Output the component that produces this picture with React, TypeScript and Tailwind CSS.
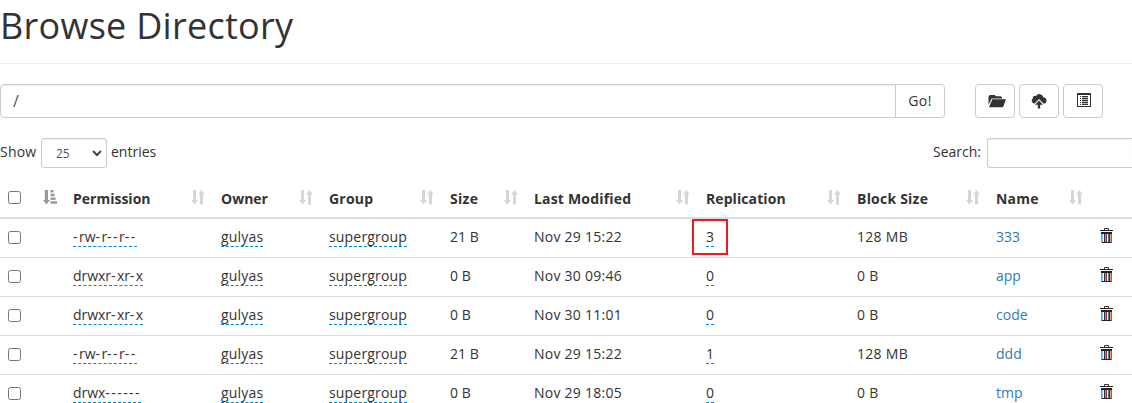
import React from "react";

type Column = { label: string; width: string; tracking: string };

const columns: Column[] = [
  { label: "Permission", width: "w-[148px]", tracking: "tracking-normal" },
  { label: "Owner", width: "w-[108px]", tracking: "tracking-normal" },
  { label: "Group", width: "w-[121px]", tracking: "tracking-[0.2px]" },
  { label: "Size", width: "w-[84px]", tracking: "tracking-[0.3px]" },
  { label: "Last Modified", width: "w-[172px]", tracking: "tracking-[0.18px]" },
  { label: "Replication", width: "w-[151px]", tracking: "tracking-[0.08px]" },
  { label: "Block Size", width: "w-[139px]", tracking: "tracking-[0.22px]" },
  { label: "Name", width: "w-[103px]", tracking: "tracking-[0.2px]" },
];

type Entry = {
  permission: string;
  size: string;
  modified: string;
  replication: string;
  block: string;
  name: string;
  marked?: boolean;
};

const entries: Entry[] = [
  { permission: "-rw-r--r--", size: "21 B", modified: "Nov 29 15:22", replication: "3", block: "128 MB", name: "333", marked: true },
  { permission: "drwxr-xr-x", size: "0 B", modified: "Nov 30 09:46", replication: "0", block: "0 B", name: "app" },
  { permission: "drwxr-xr-x", size: "0 B", modified: "Nov 30 11:01", replication: "0", block: "0 B", name: "code" },
  { permission: "-rw-r--r--", size: "21 B", modified: "Nov 29 15:22", replication: "1", block: "128 MB", name: "ddd" },
  { permission: "drwx------", size: "0 B", modified: "Nov 29 18:05", replication: "0", block: "0 B", name: "tmp" },
];

function SortIcon() {
  return (
    <svg width="14" height="15" viewBox="0 0 14 15" fill="#d6d6d6" className="shrink-0">
      <path d="M2 0h3v10h2l-3.500 4.500L0 10h2zM9 14.500V4.500H7L10.500 0 14 4.500h-2v10z" />
    </svg>
  );
}

function SortedIcon() {
  return (
    <svg width="14" height="15" viewBox="0 0 14 15" fill="#999" className="shrink-0">
      <path d="M1.800 0h3.200v10h2l-3.500 4.500L0 10h1.800zM7.500 0h3v2.500h-3zM7.500 3.700h4v2.500h-4zM7.500 7.500h5V10h-5zM7.500 11.200H14v2.500H7.500z" />
    </svg>
  );
}

function FolderOpenIcon() {
  return (
    <svg width="18" height="14" viewBox="0 0 18 14" fill="#333">
      <path d="M.500 11V2.500L1.800 1h5l1 1.300H13L14 3.500V4.500H3.500z" />
      <path d="M4.300 5.300H18L15 13.300H1z" />
    </svg>
  );
}

function CloudUploadIcon() {
  return (
    <svg width="16" height="15" viewBox="0 0 16 15" fill="#333">
      <path d="M3 9.500A2.900 2.900 0 0 1 1.800 4.400 2.300 2.300 0 0 1 5 2 4 4 0 0 1 12.300 3.300a3.200 3.200 0 0 1 1.200 6.200H12.500L8 5 3.700 9.500z" />
      <path d="M8 6.500l4 4.300H9.200v3.700H6.800v-3.700H4z" />
    </svg>
  );
}

function ListIcon() {
  return (
    <svg width="14" height="14" viewBox="0 0 14 14" shapeRendering="crispEdges">
      <path fill="#333" fillRule="evenodd" d="M0 0h14v14H0zM1 2v11h12V2z" />
      <path fill="#333" d="M3 3h1v1H3zM5 3h6v1H5zM3 5h1v1H3zM5 5h6v1H5zM3 7h1v1H3zM5 7h6v1H5zM3 9h1v1H3zM5 9h6v1H5zM3 11h1v1H3zM5 11h6v1H5z" />
      <path fill="#333" opacity="0.35" d="M5 4h6v1H5zM5 6h6v1H5zM5 8h6v1H5zM5 10h6v1H5z" />
    </svg>
  );
}

function TrashIcon() {
  return (
    <svg width="13" height="16" viewBox="0 0 13 16" fill="none">
      <path stroke="#333" d="M4.500 2V.500h4V2" />
      <path fill="#222" d="M0 2h13v1H0zM1 4h11v2H1zM1 14h11v1H1z" />
      <path fill="#d58b35" d="M1 6h1v9H1zM5 6h1v8H5z" />
      <path fill="#8ac4f2" d="M2 6h1v8H2z" />
      <path fill="#333" d="M4 6h1v8H4zM9 6h1v8H9z" />
      <path fill="#8b3156" d="M6 6h1v8H6z" />
      <path fill="#4c7ba8" d="M8 6h1v8H8zM11 6h1v9h-1z" />
      <path fill="#e8a552" d="M10 6h1v8h-1z" />
    </svg>
  );
}

function Checkbox() {
  return (
    <input
      type="checkbox"
      className="block size-[13px] shrink-0 appearance-none rounded-[2.5px] border border-[#767676] bg-white"
    />
  );
}

function Editable({ children, tracking = "tracking-normal" }: { children: React.ReactNode; tracking?: string }) {
  return <span className={`block h-5 border-b border-dashed border-[#0088cc] leading-5 ${tracking}`}>{children}</span>;
}

function Permission({ mode }: { mode: string }) {
  return (
    <Editable>
      {mode.split(/(-+)/).map((part, i) => (
        <span key={i} className={part.startsWith("-") ? "tracking-[1.45px]" : "tracking-[-0.05px]"}>{part}</span>
      ))}
    </Editable>
  );
}

function ToolButton({ children }: { children: React.ReactNode }) {
  return (
    <button className="flex h-[34px] w-10 items-center justify-center rounded border border-[#ccc] bg-white">
      {children}
    </button>
  );
}

export default function App() {
  return (
    <div className="h-[403px] w-[1132px] overflow-hidden bg-white font-['Open_Sans','Noto_Sans',sans-serif] text-[14px] leading-5 text-[#333]">
      <h1 className="h-16 border-b border-[#eee] pt-1.5 text-[36px] leading-10 tracking-[0.28px]">Browse Directory</h1>

      <div className="mt-5 flex">
        <div className="flex h-[34px] w-[896px] items-center rounded-l border border-[#ccc] pl-3 text-[16px] text-[#555] shadow-[inset_0_1px_1px_rgba(0,0,0,0.075)]">
          /
        </div>
        <button className="-ml-px flex h-[34px] w-[50px] items-center justify-center rounded-r border border-[#ccc] bg-white tracking-[0.4px]">
          Go!
        </button>
        <div className="ml-[30px] flex gap-1">
          <ToolButton><span className="pl-1"><FolderOpenIcon /></span></ToolButton>
          <ToolButton><CloudUploadIcon /></ToolButton>
          <ToolButton><span className="pb-0.5 pl-0.5"><ListIcon /></span></ToolButton>
        </div>
      </div>

      <div className="mt-5 flex h-[30px] justify-between">
        <div className="flex">
          <span className="w-[41px] pt-1 tracking-[0.2px]">Show</span>
          <div className="flex h-[30px] w-[66px] items-center justify-between rounded-[3px] border border-[#ccc] pr-1 pl-3.5 text-[12px] text-[#555] shadow-[inset_0_1px_1px_rgba(0,0,0,0.075)]">
            <span className="pt-px">25</span>
            <svg width="10" height="7" viewBox="0 0 10 7" fill="none" stroke="#444" strokeWidth="2">
              <path d="M1 1l4 4 4-4" />
            </svg>
          </div>
          <span className="pt-1 pl-1">entries</span>
        </div>
        <div className="flex">
          <span className="w-[54px] pt-1">Search:</span>
          <div className="h-[30px] w-[145px] rounded-l-[3px] border border-r-0 border-[#ccc] shadow-[inset_0_1px_1px_rgba(0,0,0,0.075)]" />
        </div>
      </div>

      <div className="flex h-[51px] border-b-2 border-[#ddd] font-bold">
        <div className="flex w-[65px] justify-between pt-[22px] pr-2 pl-2">
          <div className="pt-px"><Checkbox /></div>
          <SortedIcon />
        </div>
        {columns.map((c) => (
          <div key={c.label} className={`flex justify-between px-2 pt-[21px] ${c.width}`}>
            <span className={`whitespace-nowrap ${c.tracking}`}>{c.label}</span>
            <div className="pt-px"><SortIcon /></div>
          </div>
        ))}
      </div>

      {entries.map((e, i) => (
        <div key={i} className="flex h-[39px] border-b border-[#ddd] pt-2">
          <div className="w-[65px] pt-1 pl-2"><Checkbox /></div>
          <div className="flex w-[148px] pl-2"><Permission mode={e.permission} /></div>
          <div className="flex w-[108px] pl-2"><Editable tracking="tracking-[0.2px]">gulyas</Editable></div>
          <div className="flex w-[121px] pl-2"><Editable tracking="tracking-[0.18px]">supergroup</Editable></div>
          <div className="w-[84px] pl-2">{e.size}</div>
          <div className="w-[172px] pl-2 tracking-[0.25px]">{e.modified}</div>
          <div className="relative flex w-[151px] pl-2">
            <Editable>{e.replication}</Editable>
            {e.marked && <div className="absolute -top-2 -left-1.5 h-9 w-9 border-2 border-[#ed1c24]" />}
          </div>
          <div className="w-[139px] pl-2 tracking-[0.3px]">{e.block}</div>
          <div className="w-[103px] pl-2 text-[#337ab7]">{e.name}</div>
          <div className="pt-px pl-[9px]"><TrashIcon /></div>
        </div>
      ))}
    </div>
  );
}
